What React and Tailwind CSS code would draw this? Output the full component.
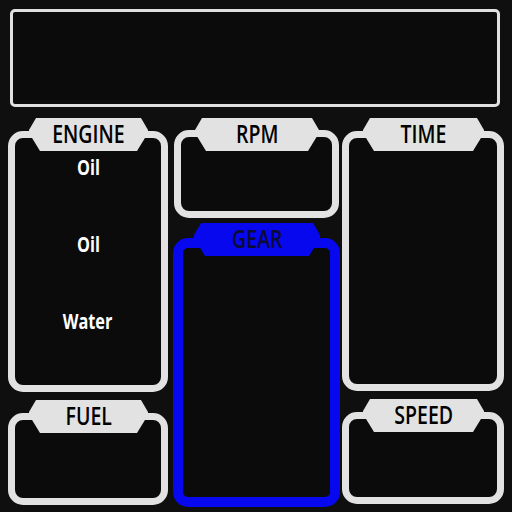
import React from 'react';

const labelFont = { fontFamily: '"Open Sans", "DejaVu Sans Condensed", "Liberation Sans", sans-serif' };

const Panel = ({ label, blue, className, tabTop = 'pt-[13px]', children }) => {
  const edge = blue ? 'border-[#0808ee] border-[10px]' : 'border-[#e2e2e2] border-[7px]';
  const tabBg = blue ? 'bg-[#0808ee] text-[#0b0b36]' : 'bg-[#e2e2e2] text-black';

  return (
    <div className={`relative flex flex-col ${tabTop} ${className}`}>
      <div
        className={`absolute top-0 left-[21px] right-[20px] h-[33px] flex items-center justify-center pb-[3px] ${tabBg}`}
        style={{ clipPath: 'polygon(7px 0, calc(100% - 7px) 0, 100% 12px, 100% 15px, calc(100% - 11px) 100%, 11px 100%, 0 15px, 0 12px)' }}
      >
        <span className="inline-block text-[25px] font-semibold leading-none scale-x-[0.78]" style={labelFont}>{label}</span>
      </div>
      <div className={`flex-1 rounded-[15px] bg-[#0b0b0b] ${edge}`}>
        {children}
      </div>
    </div>
  );
};

const EngineRow = ({ text }) => (
  <p className="inline-block text-[22px] font-bold text-white leading-none scale-x-[0.74]" style={labelFont}>{text}</p>
);

export default function App() {
  return (
    <div className="w-[512px] h-[512px] bg-[#0f0f0f] overflow-hidden flex flex-col">
      <div className="ml-[10px] mr-[12px] mt-[9px] h-[98px] rounded-[5px] border-[3px] border-[#e0e0e0] bg-[#0b0b0b]" />

      <div className="flex mt-[11px] pl-[8px]">
        <div className="w-[160px] flex flex-col gap-[8px]">
          <Panel label="ENGINE" className="h-[274px]">
            <div className="flex flex-col items-center pt-[17px] gap-[55px]">
              <EngineRow text="Oil" />
              <EngineRow text="Oil" />
              <EngineRow text="Water" />
            </div>
          </Panel>
          <Panel label="FUEL" className="h-[105px]" />
        </div>

        <div className="w-[167px] ml-[5px] flex flex-col gap-[5px]">
          <Panel label="RPM" className="h-[100px] mx-[1px]" tabTop="pt-[12px]" />
          <Panel label="GEAR" blue className="h-[284px]" tabTop="pt-[15px]" />
        </div>

        <div className="w-[162px] ml-[2px] flex flex-col gap-[8px]">
          <Panel label="TIME" className="h-[273px]" />
          <Panel label="SPEED" className="h-[105px]" />
        </div>
      </div>
    </div>
  );
}
